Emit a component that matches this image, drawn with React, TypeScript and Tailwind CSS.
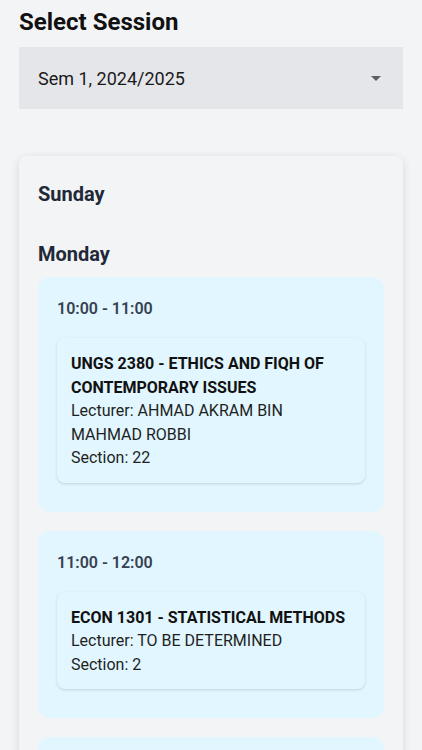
import React from "react";

type Course = { title: string; lecturer: string; section: string };
type Slot = { time: string; courses: Course[] };
type Day = { name: string; slots: Slot[] };

const days: Day[] = [
  { name: "Sunday", slots: [] },
  {
    name: "Monday",
    slots: [
      {
        time: "10:00 - 11:00",
        courses: [
          {
            title: "UNGS 2380 - ETHICS AND FIQH OF CONTEMPORARY ISSUES",
            lecturer: "AHMAD AKRAM BIN MAHMAD ROBBI",
            section: "22",
          },
        ],
      },
      {
        time: "11:00 - 12:00",
        courses: [
          {
            title: "ECON 1301 - STATISTICAL METHODS",
            lecturer: "TO BE DETERMINED",
            section: "2",
          },
        ],
      },
      {
        time: "14:00 - 15:00",
        courses: [
          {
            title: "ECON 1101 - MICROECONOMICS",
            lecturer: "TO BE DETERMINED",
            section: "1",
          },
        ],
      },
    ],
  },
];

export default function App() {
  return (
    <div
      className="min-h-screen bg-[#f3f4f6] px-[19px] pt-[6px] pb-8"
      style={{ fontFamily: "Roboto, 'Noto Sans', sans-serif" }}
    >
      <h1 className="text-[24px] leading-[32px] font-bold text-[#111111]">Select Session</h1>
      <div className="mt-[9px] h-[62px] bg-[#e5e6ea] flex items-center justify-between pl-[19px] pr-[22px]">
        <span className="text-[18px] text-[#1a1a1a]">Sem 1, 2024/2025</span>
        <svg width="10" height="5" viewBox="0 0 10 5">
          <path d="M0 0 L10 0 L5 5 Z" fill="#5f5f63" />
        </svg>
      </div>

      <div className="mt-[47px] rounded-[8px] bg-[#f3f4f6] shadow-[0_2px_8px_rgba(0,0,0,0.12)] px-[19px] pt-[24px] pb-6">
        {days.map((day, di) => (
          <div key={day.name} className={di > 0 ? "mt-[32px]" : ""}>
            <h2 className="text-[20px] leading-[28px] font-bold text-[#1f2937]">{day.name}</h2>
            {day.slots.length > 0 && (
              <div className="mt-[9px] flex flex-col gap-[19px]">
                {day.slots.map((slot) => (
                  <div key={slot.time} className="rounded-[12px] bg-[#e1f6fe] px-[19px] pt-[20px] pb-[29px]">
                    <div className="text-[16px] leading-[24px] font-semibold text-[#374151]">{slot.time}</div>
                    {slot.courses.map((c) => (
                      <div
                        key={c.title}
                        className="mt-[17px] rounded-[8px] bg-[#e1f6fe] shadow-[0_1px_3px_rgba(0,0,0,0.14)] pl-[14px] pr-[10px] pt-[14px] pb-[13px] text-[16px] leading-[23.5px]"
                      >
                        <div className="font-bold text-[#111111]">{c.title}</div>
                        <div className="text-[#1f1f1f]">Lecturer: {c.lecturer}</div>
                        <div className="text-[#1f1f1f]">Section: {c.section}</div>
                      </div>
                    ))}
                  </div>
                ))}
              </div>
            )}
          </div>
        ))}
      </div>
    </div>
  );
}
